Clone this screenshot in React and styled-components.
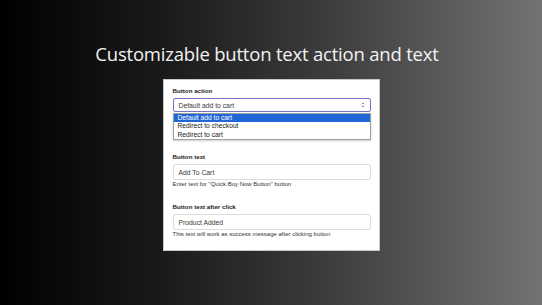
import React from "react";
import styled, { createGlobalStyle } from "styled-components";

const Global = createGlobalStyle`
  html, body { margin: 0; padding: 0; }
  body { width: 542px; height: 305px; overflow: hidden; }
`;

const Page = styled.div`
  width: 542px;
  height: 305px;
  background: linear-gradient(90deg, #000 0%, #1a1a1a 30%, #3c3c3c 60%, #727272 100%);
  display: flex;
  flex-direction: column;
  align-items: center;
  font-family: "Liberation Sans", Arial, sans-serif;
`;

const Title = styled.h1`
  margin: 41px 8px 0 0;
  height: 26px;
  font-family: "Open Sans", sans-serif;
  font-weight: 400;
  font-size: 18.5px;
  line-height: 26px;
  color: #f2f2f2;
  letter-spacing: -0.2px;
`;

const Panel = styled.div`
  margin-top: 12px;
  width: 198px;
  padding: 7px 8px 12px 9px;
  background: #fff;
  border: 1px solid #c8c8c8;
  display: flex;
  flex-direction: column;
`;

const Field = styled.div`
  display: flex;
  flex-direction: column;
  position: relative;
  margin-bottom: ${(p) => p.$mb || 0}px;
`;

const Label = styled.div`
  font-size: 6.2px;
  font-weight: 700;
  color: #222;
  line-height: 8px;
  margin-bottom: 3px;
`;

const Box = styled.div`
  height: ${(p) => p.$h}px;
  box-sizing: border-box;
  border: 1px solid ${(p) => (p.$focus ? "#7373c9" : "#dcdcdc")};
  border-radius: 2px;
  display: flex;
  align-items: center;
  padding: 0 5px;
  font-size: 6.8px;
  color: #3a3a3a;
  justify-content: space-between;
`;

const Help = styled.div`
  font-size: 6px;
  color: #333;
  line-height: 8px;
`;

const Menu = styled.div`
  position: absolute;
  left: 0;
  right: 0;
  top: 26px;
  background: #fff;
  border: 1px solid #a0a0a0;
  box-shadow: 0 1px 2px rgba(0,0,0,0.2);
  display: flex;
  flex-direction: column;
`;

const Option = styled.div`
  height: 8.3px;
  line-height: 8.3px;
  padding-left: 4px;
  font-size: 6.7px;
  color: ${(p) => (p.$active ? "#fff" : "#222")};
  background: ${(p) => (p.$active ? "#1f66d6" : "#fff")};
`;

const Arrows = () => (
  <svg width="4" height="6" viewBox="0 0 4 6">
    <path d="M0.8 2.2 L2 1 L3.2 2.2 M0.8 3.8 L2 5 L3.2 3.8" fill="none" stroke="#555" strokeWidth="0.7" />
  </svg>
);

export default function App() {
  return (
    <>
      <Global />
      <Page>
        <Title>Customizable button text action and text</Title>
        <Panel>
          <Field $mb={41}>
            <Label>Button action</Label>
            <Box $h={14} $focus>
              <span>Default add to cart</span>
              <Arrows />
            </Box>
            <Menu>
              <Option $active>Default add to cart</Option>
              <Option>Redirect to checkout</Option>
              <Option>Redirect to cart</Option>
            </Menu>
          </Field>
          <Field $mb={15}>
            <Label>Button text</Label>
            <Box $h={16}>Add To Cart</Box>
            <Help>Enter text for "Quick Buy Now Button" button</Help>
          </Field>
          <Field>
            <Label>Button text after click</Label>
            <Box $h={16}>Product Added</Box>
            <Help>This text will work as success message after clicking button</Help>
          </Field>
        </Panel>
      </Page>
    </>
  );
}
